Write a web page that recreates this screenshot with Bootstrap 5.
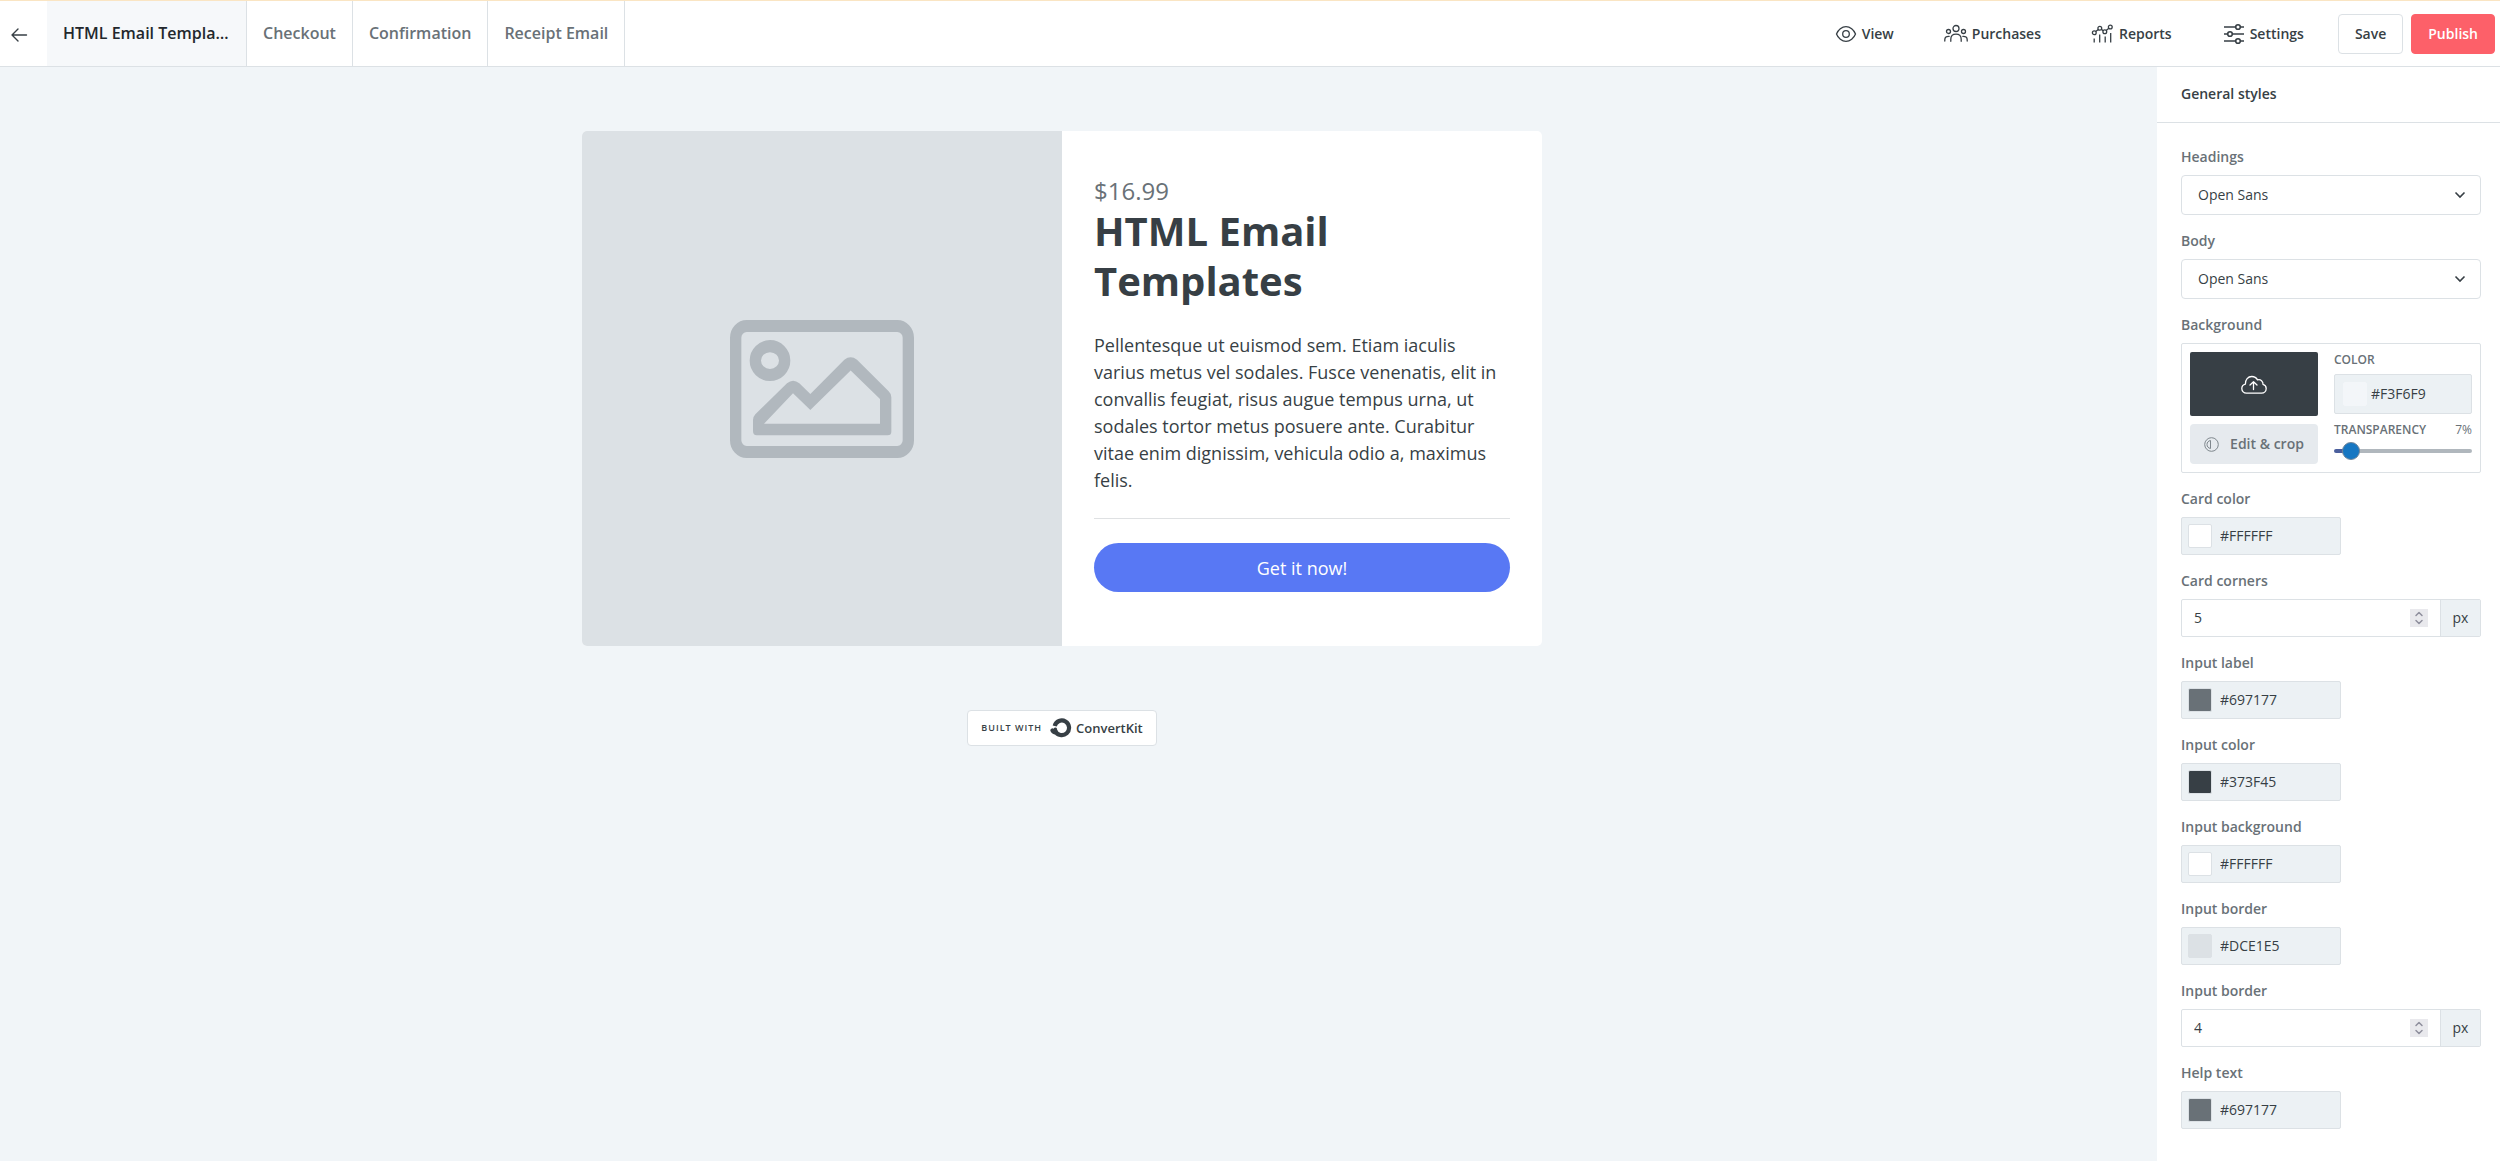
<!DOCTYPE html>
<html lang="en">
<head>
<meta charset="utf-8">
<meta name="viewport" content="width=device-width, initial-scale=1">
<title>HTML Email Templates</title>
<link href="https://cdn.jsdelivr.net/npm/bootstrap@5.3.0/dist/css/bootstrap.min.css" rel="stylesheet">
<style>
  :root { --ink: #373f45; --muted: #697177; --line: #dce1e5; --soft: #ecf1f4; --canvas: #f1f5f8; }
  body { font-family: "Open Sans", sans-serif; font-size: 14px; line-height: 20px; color: var(--ink); background: var(--canvas); }
  a { color: inherit; text-decoration: none; }
  svg { flex: none; }

  .topbar { border-top: 1px solid #fae5c3; border-bottom: 1px solid var(--line); padding-right: 5px; }
  .back-link { width: 47px; padding-left: 11px; }
  .step-tabs { font-size: 16px; line-height: 65px; font-weight: 600; color: var(--muted); }
  .step-tabs a { padding: 0 16px; border-right: 1px solid var(--line); }
  .step-tabs a.active { width: 200px; color: #23282d; background: #f6f8fa; }
  .tool-links { gap: 50px; margin-right: 34px; font-weight: 600; }
  .tool-links a { gap: 4px; }
  .top-btn { height: 40px; padding: 0 16px; font-size: 14px; font-weight: 600; border-radius: 4px; border: 1px solid var(--line); color: var(--ink); background: #fff; }
  .top-btn.publish { border-color: #fd6069; background: #fd6069; color: #fff; }

  .canvas { padding: 64px 33px 32px 0; }
  .product { width: 960px; border-radius: 5px; }
  .product-image { background: #dce1e5; }
  .product-text { padding: 45px 32px 54px; }
  .price { font-size: 24px; line-height: 30px; color: var(--muted); }
  .product h1 { font-size: 40px; line-height: 50px; font-weight: 700; margin-bottom: 26px; }
  .product p { font-size: 18px; line-height: 27px; margin-bottom: 24px; }
  .product hr { margin: 0 0 24px; border-color: #dfe1e3; opacity: 1; }
  .buy-btn { height: 49px; border-radius: 25px; background: #5878f4; color: #fff; font-size: 18px; border: 0; }
  .built-badge { margin-top: 64px; width: 190px; height: 36px; border: 1px solid var(--line); border-radius: 4px; background: #fff; }
  .built-badge small { font-size: 9px; font-weight: 600; letter-spacing: 1px; }
  .built-badge b { font-size: 13px; font-weight: 600; }

  .styles-panel { width: 343px; flex: none; }
  .panel-head { height: 56px; padding: 0 24px; border-bottom: 1px solid var(--line); font-size: 14px; font-weight: 600; }
  .panel-body { padding: 24px 19px 32px 24px; display: flex; flex-direction: column; gap: 16px; }
  .field-label { display: block; margin-bottom: 8px; line-height: 20px; font-weight: 600; color: var(--muted); }
  .font-select { height: 40px; padding: 0 40px 0 16px; font-size: 14px; line-height: 20px; color: var(--ink); border-color: var(--line); border-radius: 4px;
    background-image: url("data:image/svg+xml,%3csvg xmlns='http://www.w3.org/2000/svg' viewBox='0 0 12 12'%3e%3cpath d='M1.500 3.500l4.500 4.500 4.500-4.500' fill='none' stroke='%23373f45' stroke-width='1.600'/%3e%3c/svg%3e");
    background-size: 12px; background-position: right 14px center; }
  .bg-box { border: 1px solid var(--line); border-radius: 2px; padding: 8px; gap: 16px; }
  .bg-box > div { min-width: 0; }
  .bg-left { width: 128px; gap: 8px; }
  .upload-btn { height: 64px; border: 0; border-radius: 2px; background: #373f45; color: #fff; }
  .crop-btn { height: 40px; border: 0; border-radius: 4px; background: #e6eaee; color: var(--muted); font-weight: 600; gap: 11px; padding: 0 14px; }
  .tiny-label { font-size: 12px; line-height: 16px; color: var(--muted); }
  .tiny-label label { display: block; margin-bottom: 6px; font-weight: 600; }
  .tiny-label.fade-head label { margin-bottom: 0; }
  .hex { height: 38px; width: 160px; border: 1px solid var(--line); border-radius: 2px; background: var(--soft); padding: 0 6px; gap: 8px; }
  .hex.wide { width: 100%; height: 40px; padding: 0 8px; gap: 4px; }
  .hex input, .num input { border: 0; background: none; padding: 0; min-width: 0; flex: 1; color: var(--ink); outline: 0; }
  .swatch { width: 24px; height: 24px; flex: none; border: 1px solid var(--line); border-radius: 2px; }
  .swatch.pale { border-color: #f3f6f9; }
  .num { height: 38px; border: 1px solid var(--line); border-radius: 2px; }
  .num input { padding-left: 12px; appearance: textfield; -moz-appearance: textfield; }
  .num input::-webkit-inner-spin-button { display: none; }
  .stepper { width: 18px; height: 18px; border: 0; padding: 0; margin-right: 12px; background: #e9e9ed; display: flex; }
  .unit { width: 40px; align-self: stretch; border-left: 1px solid var(--line); background: var(--soft); }
  .fade-range { height: 18px; display: block; }
  .fade-range::-webkit-slider-runnable-track { height: 4px; border-radius: 2px; background: linear-gradient(90deg, #4b5f9d 12%, #b0b7bd 12%); }
  .fade-range::-webkit-slider-thumb { width: 18px; height: 18px; margin-top: -7px; background: #1777c2; border: 1px solid #74879a; }
</style>
<script src="https://cdn.jsdelivr.net/npm/bootstrap@5.3.0/dist/js/bootstrap.bundle.min.js"></script>
</head>
<body class="d-flex flex-column min-vh-100">

<header class="topbar bg-white d-flex align-items-center">
  <a href="#" class="back-link" aria-label="Back">
    <svg width="17" height="14" viewBox="0 0 17 14" fill="none" stroke="#373f45" stroke-width="1.4" stroke-linecap="round" stroke-linejoin="round"><path d="M15.500 7H1M7 1L1 7l6 6"/></svg>
  </a>
  <nav class="step-tabs d-flex">
    <a href="#" class="active text-truncate">HTML Email Templates</a>
    <a href="#">Checkout</a>
    <a href="#">Confirmation</a>
    <a href="#">Receipt Email</a>
  </nav>
  <nav class="tool-links d-flex ms-auto">
    <a href="#" class="d-flex align-items-center">
      <svg width="24" height="20" viewBox="0 0 24 20" fill="none" stroke="#373f45" stroke-width="1.3"><path d="M2.500 10C4 6 8 2.600 12 2.600S20 6 21.500 10C20 14 16 17.400 12 17.400S4 14 2.500 10Z"/><circle cx="12" cy="10" r="3.300"/></svg>
      View</a>
    <a href="#" class="d-flex align-items-center">
      <svg width="24" height="20" viewBox="0 0 24 20" fill="none" stroke="#373f45" stroke-width="1.300" stroke-linecap="round"><circle cx="12" cy="4.500" r="3"/><circle cx="4.500" cy="7.500" r="2"/><circle cx="19.500" cy="7.500" r="2"/><path d="M6.800 17.300v-2c0-3.100 2-5.100 5.200-5.100s5.200 2 5.200 5.100v2M.8 17v-1.200c0-2.400 1.500-3.700 4.400-3.500M23.200 17v-1.200c0-2.400-1.500-3.700-4.400-3.500"/></svg>
      Purchases</a>
    <a href="#" class="d-flex align-items-center">
      <svg width="24" height="20" viewBox="0 0 24 20" fill="none" stroke="#373f45" stroke-width="1.300"><circle cx="3.300" cy="8.800" r="1.900"/><circle cx="8.800" cy="4.300" r="1.900"/><circle cx="13.800" cy="7.800" r="1.900"/><circle cx="19.300" cy="3" r="1.900"/><path d="M4.700 7.500l2.600-2M10.300 5.400l2 1.400M15.200 6.500l2.600-2.200M3.200 14.500v4M8.700 10.500v8M14.200 12.500v6M19.700 9v9.500"/></svg>
      Reports</a>
    <a href="#" class="d-flex align-items-center">
      <svg width="24" height="22" viewBox="0 0 24 22" fill="none" stroke="#373f45" stroke-width="1.600"><path d="M2 4h11.500M18.500 4H22M2 11h3.500M10.500 11H22M2 18h11.500M18.500 18H22"/><circle cx="16" cy="4" r="2.300"/><circle cx="8" cy="11" r="2.300"/><circle cx="16" cy="18" r="2.300"/></svg>
      Settings</a>
  </nav>
  <div class="d-flex gap-2">
    <button type="button" class="btn top-btn">Save</button>
    <button type="button" class="btn top-btn publish">Publish</button>
  </div>
</header>

<div class="d-flex flex-grow-1">
  <main class="canvas flex-grow-1 d-flex flex-column align-items-center">
    <section class="product row g-0 bg-white overflow-hidden">
      <div class="col-6 product-image d-flex align-items-center justify-content-center">
        <svg width="184" height="138" viewBox="510 585 552 388" preserveAspectRatio="none" role="img" aria-label="Image placeholder" fill="#b1b8be">
          <rect x="527" y="602" width="518" height="354" rx="33" fill="none" stroke="#b1b8be" stroke-width="34"/>
          <ellipse cx="630" cy="699" rx="44" ry="40.500" fill="none" stroke="#b1b8be" stroke-width="34"/>
          <path fill-rule="evenodd" d="M579 866Q579 857 586 850L681 763Q699 748 718 763L751 793L853 697Q872 683 891 697L986 785Q994 792 994 802V899Q994 909 983 909H590Q579 909 579 897ZM612 877L699 791L751 838L872 727L960 807V877Z"/>
        </svg>
      </div>
      <div class="col-6 product-text">
        <div class="price">$16.99</div>
        <h1>HTML Email Templates</h1>
        <p>Pellentesque ut euismod sem. Etiam iaculis varius metus vel sodales. Fusce venenatis, elit in convallis feugiat, risus augue tempus urna, ut sodales tortor metus posuere ante. Curabitur vitae enim dignissim, vehicula odio a, maximus felis.</p>
        <hr>
        <button type="button" class="buy-btn w-100">Get it now!</button>
      </div>
    </section>
    <a href="#" class="built-badge d-flex align-items-center justify-content-center">
      <small>BUILT WITH</small>
      <svg class="ms-2" width="22" height="20" viewBox="0 0 22 20"><path d="M4.700 8A7.300 7.300 0 1 1 5.200 13" fill="none" stroke="#373f45" stroke-width="4.200"/><path d="M.3 12.500C.5 10.500 2.500 9.500 3.500 10.700C4.500 9.200 6.500 9.200 7 10.700L7.500 14 4.500 16.500C2 15.500.5 14 .3 12.500Z" fill="#373f45"/></svg>
      <b class="ms-1">ConvertKit</b>
    </a>
  </main>

  <aside class="styles-panel bg-white">
    <h2 class="panel-head d-flex align-items-center m-0">General styles</h2>
    <form class="panel-body">
      <div>
        <label class="field-label" for="headFont">Headings</label>
        <select class="form-select font-select" id="headFont"><option>Open Sans</option></select>
      </div>
      <div>
        <label class="field-label" for="bodyFont">Body</label>
        <select class="form-select font-select" id="bodyFont"><option>Open Sans</option></select>
      </div>
      <div>
        <div class="field-label">Background</div>
        <div class="bg-box d-flex">
          <div class="bg-left d-flex flex-column flex-shrink-0">
            <button type="button" class="upload-btn" aria-label="Upload image">
              <svg width="26" height="20" viewBox="0 0 26 20" fill="none" stroke="#fff" stroke-width="1.300" stroke-linecap="round" stroke-linejoin="round"><path d="M5.500 18.200C2.800 18.200.8 16.200.8 13.600c0-2.300 1.500-4 3.600-4.500C4.200 4.800 7 1.500 10.800 1.500c2.500 0 4.600 1.300 5.700 3.400 3.200-.9 5.800 1.400 5.500 4.500 2 .6 3.200 2.200 3.200 4.200 0 2.600-2 4.600-4.600 4.600ZM12.500 14.500V6.800M9 10l3.500-3.300L16 10"/></svg>
            </button>
            <button type="button" class="crop-btn d-flex align-items-center justify-content-center text-nowrap">
              <svg width="15" height="15" viewBox="0 0 15 15" fill="none" stroke="#7f878d" stroke-width="1"><circle cx="7.500" cy="7.500" r="6.800"/><path d="M6.500 3.500v8C4.300 11.200 3 9.500 3 7.500S4.300 3.800 6.500 3.500Z"/></svg>
              Edit &amp; crop</button>
          </div>
          <div class="flex-grow-1">
            <div class="tiny-label"><label for="bgColor">COLOR</label></div>
            <div class="hex wide d-flex align-items-center"><span class="swatch pale" style="background:#f3f6f9"></span><input id="bgColor" type="text" value="#F3F6F9"></div>
            <div class="tiny-label fade-head d-flex justify-content-between mt-2"><label for="bgFade">TRANSPARENCY</label><output for="bgFade">7%</output></div>
            <input type="range" class="form-range fade-range mt-1" id="bgFade" min="0" max="100" value="7">
          </div>
        </div>
      </div>
      <div>
        <label class="field-label" for="cardColor">Card color</label>
        <div class="hex d-flex align-items-center"><span class="swatch" style="background:#ffffff"></span><input id="cardColor" type="text" value="#FFFFFF"></div>
      </div>
      <div>
        <label class="field-label" for="cardCorners">Card corners</label>
        <div class="num d-flex align-items-center">
          <input id="cardCorners" type="number" value="5">
          <button type="button" class="stepper" aria-label="Change card corners"><svg width="18" height="18" viewBox="0 0 18 18" fill="none" stroke="#8f8f9d" stroke-width="1.500" stroke-linecap="round" stroke-linejoin="round"><path d="M6 6.500L9 3.500l3 3M6 11.500l3 3 3-3"/></svg></button>
          <span class="unit d-flex align-items-center justify-content-center">px</span>
        </div>
      </div>
      <div>
        <label class="field-label" for="inputLabel">Input label</label>
        <div class="hex d-flex align-items-center"><span class="swatch" style="background:#697177"></span><input id="inputLabel" type="text" value="#697177"></div>
      </div>
      <div>
        <label class="field-label" for="inputColor">Input color</label>
        <div class="hex d-flex align-items-center"><span class="swatch" style="background:#373f45"></span><input id="inputColor" type="text" value="#373F45"></div>
      </div>
      <div>
        <label class="field-label" for="inputBg">Input background</label>
        <div class="hex d-flex align-items-center"><span class="swatch" style="background:#ffffff"></span><input id="inputBg" type="text" value="#FFFFFF"></div>
      </div>
      <div>
        <label class="field-label" for="borderColor">Input border</label>
        <div class="hex d-flex align-items-center"><span class="swatch" style="background:#dce1e5"></span><input id="borderColor" type="text" value="#DCE1E5"></div>
      </div>
      <div>
        <label class="field-label" for="borderSize">Input border</label>
        <div class="num d-flex align-items-center">
          <input id="borderSize" type="number" value="4">
          <button type="button" class="stepper" aria-label="Change input border"><svg width="18" height="18" viewBox="0 0 18 18" fill="none" stroke="#8f8f9d" stroke-width="1.500" stroke-linecap="round" stroke-linejoin="round"><path d="M6 6.500L9 3.500l3 3M6 11.500l3 3 3-3"/></svg></button>
          <span class="unit d-flex align-items-center justify-content-center">px</span>
        </div>
      </div>
      <div>
        <label class="field-label" for="helpText">Help text</label>
        <div class="hex d-flex align-items-center"><span class="swatch" style="background:#697177"></span><input id="helpText" type="text" value="#697177"></div>
      </div>
    </form>
  </aside>
</div>
</body>
</html>
